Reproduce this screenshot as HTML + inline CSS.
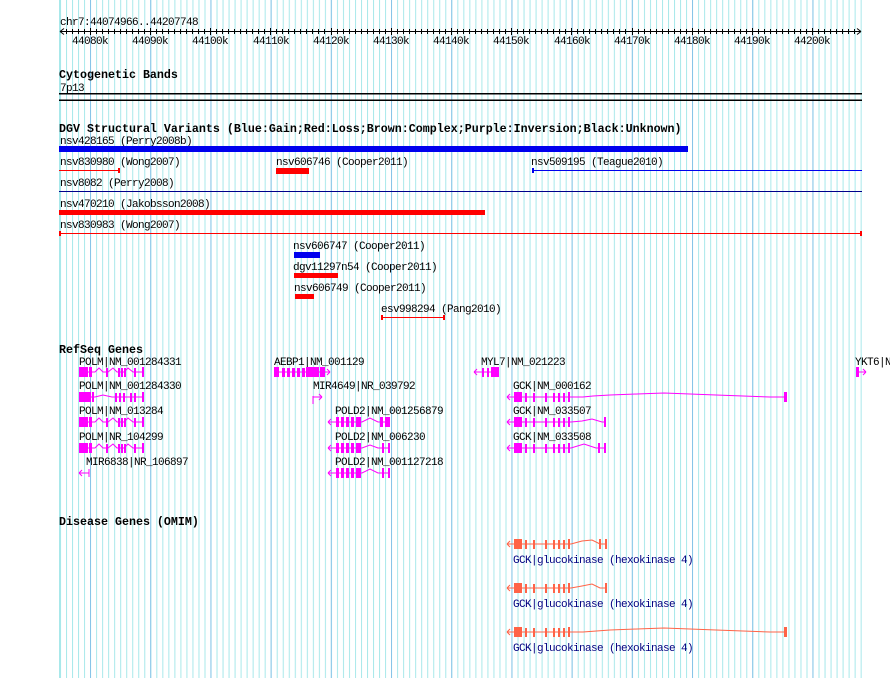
<!DOCTYPE html>
<html><head><meta charset="utf-8"><style>
html,body{margin:0;padding:0;background:#fff;width:890px;height:678px;overflow:hidden}
svg{display:block}
text{font-family:"Liberation Mono",monospace;font-size:11px;letter-spacing:-0.6px;fill:#000}
.b{font-weight:bold;font-size:11.67px;letter-spacing:0}
.o{fill:#000080}
</style></head><body>
<svg width="890" height="678" viewBox="0 0 890 678" xmlns="http://www.w3.org/2000/svg">
<defs>
<pattern id="lg" x="60" y="0" width="6.02" height="10" patternUnits="userSpaceOnUse"><rect x="0" y="0" width="1" height="10" fill="#a8e8ea"/></pattern>
<pattern id="dg" x="90" y="0" width="60.2" height="10" patternUnits="userSpaceOnUse"><rect x="0" y="0" width="1" height="10" fill="#88c4e8"/></pattern>
</defs>
<rect x="59" y="0" width="803" height="678" fill="url(#lg)"/>
<rect x="59" y="0" width="2" height="678" fill="#a8e8ea"/>
<rect x="59" y="0" width="803" height="678" fill="url(#dg)"/>

<text x="60" y="25">chr7:44074966..44207748</text>
<line x1="60" y1="31.5" x2="861" y2="31.5" stroke="#000"/>
<path d="M60 31.5 l4 -3 M60 31.5 l4 3 M861 31.5 l-4 -3 M861 31.5 l-4 3" stroke="#000" fill="none"/>
<path stroke="#000" stroke-width="1" d="M66.5 29v5M72.5 29v5M78.5 29v5M84.5 29v5M90.5 28v7M96.5 29v5M102.5 29v5M108.5 29v5M114.5 29v5M120.5 29v5M126.5 29v5M132.5 29v5M138.5 29v5M144.5 29v5M150.5 28v7M156.5 29v5M162.5 29v5M168.5 29v5M174.5 29v5M180.5 29v5M186.5 29v5M192.5 29v5M198.5 29v5M204.5 29v5M210.5 28v7M216.5 29v5M222.5 29v5M228.5 29v5M234.5 29v5M240.5 29v5M246.5 29v5M252.5 29v5M258.5 29v5M264.5 29v5M270.5 28v7M276.5 29v5M282.5 29v5M288.5 29v5M294.5 29v5M300.5 29v5M306.5 29v5M312.5 29v5M318.5 29v5M324.5 29v5M331.5 28v7M337.5 29v5M343.5 29v5M349.5 29v5M355.5 29v5M361.5 29v5M367.5 29v5M373.5 29v5M379.5 29v5M385.5 29v5M391.5 28v7M397.5 29v5M403.5 29v5M409.5 29v5M415.5 29v5M421.5 29v5M427.5 29v5M433.5 29v5M439.5 29v5M445.5 29v5M451.5 28v7M457.5 29v5M463.5 29v5M469.5 29v5M475.5 29v5M481.5 29v5M487.5 29v5M493.5 29v5M499.5 29v5M505.5 29v5M511.5 28v7M517.5 29v5M523.5 29v5M529.5 29v5M535.5 29v5M541.5 29v5M547.5 29v5M553.5 29v5M559.5 29v5M565.5 29v5M571.5 28v7M577.5 29v5M583.5 29v5M589.5 29v5M595.5 29v5M601.5 29v5M607.5 29v5M613.5 29v5M619.5 29v5M625.5 29v5M632.5 28v7M638.5 29v5M644.5 29v5M650.5 29v5M656.5 29v5M662.5 29v5M668.5 29v5M674.5 29v5M680.5 29v5M686.5 29v5M692.5 28v7M698.5 29v5M704.5 29v5M710.5 29v5M716.5 29v5M722.5 29v5M728.5 29v5M734.5 29v5M740.5 29v5M746.5 29v5M752.5 28v7M758.5 29v5M764.5 29v5M770.5 29v5M776.5 29v5M782.5 29v5M788.5 29v5M794.5 29v5M800.5 29v5M806.5 29v5M812.5 28v7M818.5 29v5M824.5 29v5M830.5 29v5M836.5 29v5M842.5 29v5M848.5 29v5M854.5 29v5"/>
<g text-anchor="middle">
<text x="90" y="44">44080k</text><text x="150" y="44">44090k</text><text x="210" y="44">44100k</text><text x="271" y="44">44110k</text><text x="331" y="44">44120k</text><text x="391" y="44">44130k</text><text x="451" y="44">44140k</text><text x="511" y="44">44150k</text><text x="572" y="44">44160k</text><text x="632" y="44">44170k</text><text x="692" y="44">44180k</text><text x="752" y="44">44190k</text><text x="812" y="44">44200k</text>
</g>

<text class="b" x="59" y="78">Cytogenetic Bands</text>
<text x="60" y="91">7p13</text>
<rect x="59" y="93" width="803" height="1.5" fill="#000"/>
<rect x="59" y="99.5" width="803" height="1.5" fill="#000"/>

<text class="b" x="59" y="132">DGV Structural Variants (Blue:Gain;Red:Loss;Brown:Complex;Purple:Inversion;Black:Unknown)</text>
<text x="60" y="144">nsv428165 (Perry2008b)</text>
<rect x="59" y="146" width="629" height="6" fill="#0000ee"/>
<text x="60" y="165">nsv830980 (Wong2007)</text>
<rect x="59" y="170" width="60" height="1" fill="#f00"/><rect x="118" y="168" width="2" height="5" fill="#f00"/>
<text x="276" y="165">nsv606746 (Cooper2011)</text>
<rect x="276" y="168" width="33" height="6" fill="#f00"/>
<text x="531" y="165">nsv509195 (Teague2010)</text>
<rect x="532" y="170" width="330" height="1" fill="#00e"/><rect x="532" y="168" width="2" height="5" fill="#00e"/>
<text x="60" y="186">nsv8082 (Perry2008)</text>
<rect x="59" y="191" width="803" height="1" fill="#00008b"/>
<text x="60" y="207">nsv470210 (Jakobsson2008)</text>
<rect x="59" y="210" width="426" height="5" fill="#f00"/>
<text x="60" y="228">nsv830983 (Wong2007)</text>
<rect x="59" y="233" width="803" height="1" fill="#f00"/><rect x="59" y="231" width="2" height="5" fill="#f00"/><rect x="860" y="231" width="2" height="5" fill="#f00"/>
<text x="293" y="249">nsv606747 (Cooper2011)</text>
<rect x="294" y="252" width="26" height="6" fill="#0000ee"/>
<text x="293" y="270">dgv11297n54 (Cooper2011)</text>
<rect x="294" y="273" width="44" height="5" fill="#f00"/>
<text x="294" y="291">nsv606749 (Cooper2011)</text>
<rect x="295" y="294" width="19" height="5" fill="#f00"/>
<text x="381" y="312">esv998294 (Pang2010)</text>
<rect x="381" y="317" width="63" height="1" fill="#f00"/><rect x="381" y="315" width="2" height="5" fill="#f00"/><rect x="443" y="315" width="2" height="5" fill="#f00"/>

<text class="b" x="59" y="353">RefSeq Genes</text>
<g>
<text x="79" y="365">POLM|NM_001284331</text>
<text x="79" y="389">POLM|NM_001284330</text>
<text x="79" y="414">POLM|NM_013284</text>
<text x="79" y="440">POLM|NR_104299</text>
<text x="86" y="465">MIR6838|NR_106897</text>
<text x="274" y="365">AEBP1|NM_001129</text>
<text x="313" y="389">MIR4649|NR_039792</text>
<text x="335" y="414">POLD2|NM_001256879</text>
<text x="335" y="440">POLD2|NM_006230</text>
<text x="335" y="465">POLD2|NM_001127218</text>
<text x="481" y="365">MYL7|NM_021223</text>
<text x="513" y="389">GCK|NM_000162</text>
<text x="513" y="414">GCK|NM_033507</text>
<text x="513" y="440">GCK|NM_033508</text>
<text x="855" y="365">YKT6|N</text>
</g>
<g stroke="#f0f" fill="none" stroke-width="1">
<polyline points="79,372 95,372 99,368 103,372 108,372 113,368 117,372 124,372 128,368 133,372 144,372"/>
<polyline points="79,397 95,397 103,395 112,397 144,397"/>
<polyline points="79,422 95,422 99,418 103,422 108,422 113,418 117,422 124,422 128,418 133,422 144,422"/>
<polyline points="79,448 95,448 99,444 103,448 108,448 113,444 117,448 124,448 128,444 133,448 144,448"/>
<path d="M79 473h10M79 473l3-3M79 473l3 3M89 469v8"/>
<path d="M274 372h56M330 372l-3-3M330 372l-3 3"/>
<path d="M313 396v8M313 397h9M322 397l-3-3M322 397l-3 3"/>
<polyline points="328,422 362,422 370,418 378,422 390,422"/><path d="M328 422l3-3M328 422l3 3"/>
<polyline points="328,448 362,448 370,445 378,448 390,448"/><path d="M328 448l3-3M328 448l3 3"/>
<polyline points="328,473 362,473 370,469 378,473 390,473"/><path d="M328 473l3-3M328 473l3 3"/>
<path d="M474 372h25M474 372l3-3M474 372l3 3"/>
<path d="M856 372h10M866 372l-3-3M866 372l-3 3"/>
<polyline points="507,397 571,397 583,397 593,396 610,395 637,394 664,393 690,394 716,395 743,396 770,397 786,397"/><path d="M507 397l3-3M507 397l3 3"/>
<polyline points="507,422 571,422 582,421 592,419 602,422 606,422"/><path d="M507 422l3-3M507 422l3 3"/>
<polyline points="507,448 571,448 584,444 596,448 606,448"/><path d="M507 448l3-3M507 448l3 3"/>
</g>
<g fill="#f0f">
<rect x="79" y="367" width="9" height="10"/><rect x="89" y="367" width="3" height="10"/><rect x="106" y="368" width="2" height="9"/><rect x="118" y="368" width="2" height="9"/><rect x="121" y="368" width="2" height="9"/><rect x="124" y="368" width="2" height="9"/><rect x="134" y="368" width="2" height="9"/><rect x="142" y="367" width="2" height="10"/>
<rect x="79" y="392" width="12" height="10"/><rect x="92" y="392" width="2" height="10"/><rect x="115" y="393" width="2" height="9"/><rect x="119" y="393" width="2" height="9"/><rect x="123" y="393" width="2" height="9"/><rect x="130" y="393" width="2" height="9"/><rect x="134" y="393" width="2" height="9"/><rect x="142" y="392" width="2" height="10"/>
<rect x="79" y="417" width="9" height="10"/><rect x="89" y="417" width="3" height="10"/><rect x="106" y="418" width="2" height="9"/><rect x="118" y="418" width="2" height="9"/><rect x="121" y="418" width="2" height="9"/><rect x="124" y="418" width="2" height="9"/><rect x="134" y="418" width="2" height="9"/><rect x="142" y="417" width="2" height="10"/>
<rect x="79" y="443" width="9" height="10"/><rect x="89" y="443" width="3" height="10"/><rect x="106" y="444" width="2" height="9"/><rect x="118" y="444" width="2" height="9"/><rect x="121" y="444" width="2" height="9"/><rect x="124" y="444" width="2" height="9"/><rect x="134" y="444" width="2" height="9"/><rect x="142" y="443" width="2" height="10"/>
<rect x="274" y="367" width="5" height="10"/><rect x="282" y="368" width="3" height="9"/><rect x="287" y="368" width="3" height="9"/><rect x="292" y="368" width="3" height="9"/><rect x="297" y="368" width="3" height="9"/><rect x="302" y="368" width="3" height="9"/><rect x="306" y="367" width="13" height="10"/><rect x="320" y="367" width="5" height="10"/>
<rect x="336" y="417" width="3" height="10"/><rect x="341" y="417" width="3" height="10"/><rect x="346" y="417" width="3" height="10"/><rect x="351" y="417" width="3" height="10"/><rect x="356" y="417" width="5" height="10"/><rect x="380" y="417" width="3" height="10"/><rect x="385" y="417" width="5" height="10"/>
<rect x="336" y="443" width="3" height="10"/><rect x="341" y="443" width="3" height="10"/><rect x="346" y="443" width="3" height="10"/><rect x="351" y="443" width="3" height="10"/><rect x="356" y="443" width="5" height="10"/><rect x="382" y="443" width="2" height="10"/><rect x="388" y="443" width="2" height="10"/>
<rect x="336" y="468" width="3" height="10"/><rect x="341" y="468" width="3" height="10"/><rect x="346" y="468" width="3" height="10"/><rect x="351" y="468" width="3" height="10"/><rect x="356" y="468" width="5" height="10"/><rect x="382" y="468" width="2" height="10"/><rect x="388" y="468" width="2" height="10"/>
<rect x="482" y="368" width="2" height="9"/><rect x="487" y="368" width="2" height="9"/><rect x="491" y="367" width="8" height="10"/>
<rect x="856" y="367" width="3" height="10"/>
<rect x="514" y="392" width="8" height="10"/><rect x="525" y="393" width="2" height="9"/><rect x="533" y="393" width="2" height="9"/><rect x="545" y="393" width="2" height="9"/><rect x="553" y="393" width="2" height="9"/><rect x="558" y="393" width="2" height="9"/><rect x="563" y="393" width="2" height="9"/><rect x="568" y="392" width="2" height="10"/><rect x="784" y="392" width="3" height="10"/>
<rect x="514" y="417" width="8" height="10"/><rect x="525" y="418" width="2" height="9"/><rect x="533" y="418" width="2" height="9"/><rect x="545" y="418" width="2" height="9"/><rect x="553" y="418" width="2" height="9"/><rect x="558" y="418" width="2" height="9"/><rect x="563" y="418" width="2" height="9"/><rect x="568" y="417" width="2" height="10"/><rect x="604" y="417" width="2" height="10"/>
<rect x="514" y="443" width="8" height="10"/><rect x="525" y="444" width="2" height="9"/><rect x="533" y="444" width="2" height="9"/><rect x="545" y="444" width="2" height="9"/><rect x="553" y="444" width="2" height="9"/><rect x="558" y="444" width="2" height="9"/><rect x="563" y="444" width="2" height="9"/><rect x="568" y="443" width="2" height="10"/><rect x="598" y="443" width="2" height="10"/><rect x="604" y="443" width="2" height="10"/>
</g>

<text class="b" x="59" y="525">Disease Genes (OMIM)</text>
<g stroke="#ff6347" fill="none">
<polyline points="507,544 571,544 582,541 592,540 600,544 606,544"/><path d="M507 544l3-3M507 544l3 3"/>
<polyline points="507,588 571,588 582,586 592,584 600,588 606,588"/><path d="M507 588l3-3M507 588l3 3"/>
<polyline points="507,632 571,632 583,632 610,630 637,629 664,628 690,629 716,630 743,631 770,632 786,632"/><path d="M507 632l3-3M507 632l3 3"/>
</g>
<g fill="#ff6347">
<rect x="514" y="539" width="8" height="10"/><rect x="525" y="540" width="2" height="9"/><rect x="533" y="540" width="2" height="9"/><rect x="545" y="540" width="2" height="9"/><rect x="553" y="540" width="2" height="9"/><rect x="558" y="540" width="2" height="9"/><rect x="563" y="540" width="2" height="9"/><rect x="568" y="539" width="2" height="10"/><rect x="599" y="539" width="2" height="10"/><rect x="605" y="539" width="2" height="10"/>
<rect x="514" y="583" width="8" height="10"/><rect x="525" y="584" width="2" height="9"/><rect x="533" y="584" width="2" height="9"/><rect x="545" y="584" width="2" height="9"/><rect x="553" y="584" width="2" height="9"/><rect x="558" y="584" width="2" height="9"/><rect x="563" y="584" width="2" height="9"/><rect x="568" y="583" width="2" height="10"/><rect x="605" y="583" width="2" height="10"/>
<rect x="514" y="627" width="8" height="10"/><rect x="525" y="628" width="2" height="9"/><rect x="533" y="628" width="2" height="9"/><rect x="545" y="628" width="2" height="9"/><rect x="553" y="628" width="2" height="9"/><rect x="558" y="628" width="2" height="9"/><rect x="563" y="628" width="2" height="9"/><rect x="568" y="627" width="2" height="10"/><rect x="784" y="627" width="3" height="10"/>
</g>
<text class="o" x="513" y="563">GCK|glucokinase (hexokinase 4)</text>
<text class="o" x="513" y="607">GCK|glucokinase (hexokinase 4)</text>
<text class="o" x="513" y="651">GCK|glucokinase (hexokinase 4)</text>
</svg>
</body></html>
